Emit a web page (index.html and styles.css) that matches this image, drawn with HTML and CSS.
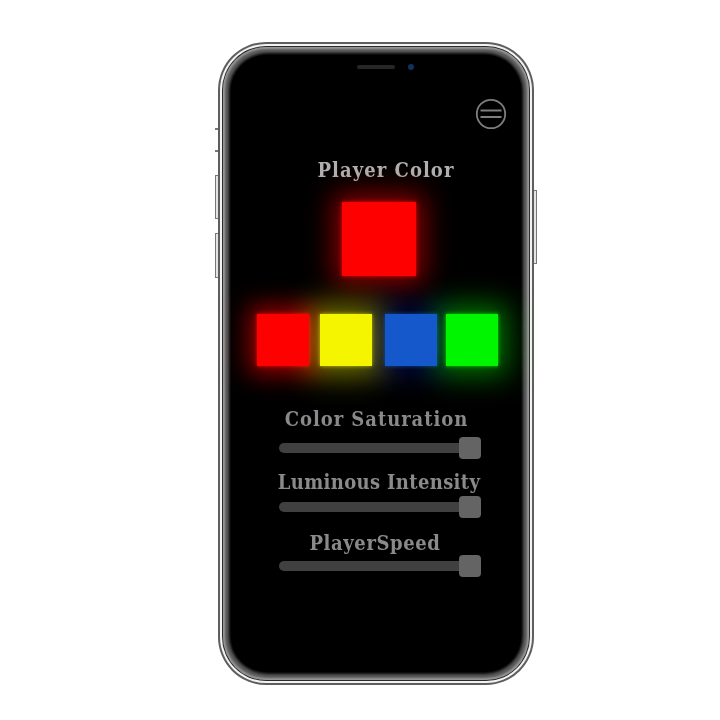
FILE: index.html
```html
<!DOCTYPE html>
<html lang="en">
<head>
<meta charset="utf-8">
<title>Player Color</title>
<link rel="stylesheet" href="styles.css">
</head>
<body>
<div class="phone">
  <span class="side side-mute-a"></span>
  <span class="side side-mute-b"></span>
  <span class="side side-vol-up"></span>
  <span class="side side-vol-down"></span>
  <span class="side side-power"></span>
  <div class="ring-white">
    <div class="ring-dark">
      <div class="ring-bezel">
        <main class="screen">
          <div class="notch">
            <span class="speaker"></span>
            <span class="camera"></span>
          </div>
          <div class="menu-row">
            <svg class="menu" width="32" height="32" viewBox="0 0 32 32" fill="none" stroke="#7e7e7e" aria-label="Menu">
              <circle cx="16" cy="16" r="14.200" stroke-width="1.800"/>
              <path d="M5.500 12.500h21M5.500 19h21" stroke-width="1.800"/>
            </svg>
          </div>
          <h1 class="title">Player Color</h1>
          <div class="swatch swatch-main"></div>
          <div class="palette">
            <div class="swatch swatch-red"></div>
            <div class="swatch swatch-yellow"></div>
            <div class="swatch swatch-blue"></div>
            <div class="swatch swatch-green"></div>
          </div>
          <section class="controls">
            <label class="label label-a">Color Saturation</label>
            <input class="slider slider-a" type="range" min="0" max="100" value="100">
            <label class="label label-b">Luminous Intensity</label>
            <input class="slider slider-b" type="range" min="0" max="100" value="100">
            <label class="label label-c">PlayerSpeed</label>
            <input class="slider slider-c" type="range" min="0" max="100" value="100">
          </section>
        </main>
      </div>
    </div>
  </div>
</div>
</body>
</html>
```

FILE: styles.css
```css
* { box-sizing: border-box; }

html, body { margin: 0; height: 100%; background: #fff; }

body { padding: 42px 0 0 218px; }

.phone {
  position: relative;
  width: 316px;
  height: 643px;
  padding: 2px;
  border-radius: 48px;
  background: #5e5e5e;
}

.ring-white {
  height: 100%;
  padding: 2px;
  border-radius: 46px;
  background: #f2f2f2;
}

.ring-dark {
  height: 100%;
  padding: 1px;
  border-radius: 44px;
  background: #2c2c2c;
}

.ring-bezel {
  height: 100%;
  padding: 8px;
  border-radius: 43px;
  background: #5c5c5c;
  box-shadow: inset 0 0 2px 2px #989898;
}

.screen {
  height: 100%;
  border-radius: 36px;
  background: #000;
  box-shadow: 0 0 3px 2px #000;
  display: flex;
  flex-direction: column;
  align-items: center;
  font-family: "DejaVu Serif Condensed", "DejaVu Serif", serif;
  font-weight: 700;
}

.side {
  position: absolute;
  width: 3px;
  background: #e4e4e4;
  border: 1px solid #777;
}
.side-mute-a { left: -3px; top: 86px; height: 1px; }
.side-mute-b { left: -3px; top: 108px; height: 1px; }
.side-vol-up { left: -3px; top: 133px; height: 44px; border-right: 0; }
.side-vol-down { left: -3px; top: 191px; height: 45px; border-right: 0; }
.side-power { right: -3px; top: 148px; height: 74px; border-left: 0; }

.notch {
  align-self: stretch;
  height: 20px;
  padding: 4px 0 0 126px;
  display: flex;
  align-items: center;
  gap: 13px;
}

.speaker {
  width: 38px;
  height: 4px;
  border-radius: 2px;
  background: #262626;
}

.camera {
  width: 6px;
  height: 6px;
  border-radius: 50%;
  background: #12305e;
}

.menu-row {
  align-self: stretch;
  height: 32px;
  margin-top: 23px;
  padding-right: 14px;
  display: flex;
  justify-content: flex-end;
}

.menu { display: block; }

.title {
  margin: 27px 0 0 20px;
  font-size: 20px;
  line-height: 26px;
  font-weight: 700;
  letter-spacing: 1.05px;
  white-space: nowrap;
  color: #b0b0b0;
  filter: blur(.3px);
}

.swatch {
  position: relative;
}

.swatch::after {
  content: "";
  position: absolute;
  inset: 0;
  z-index: 1;
  background: inherit;
}

.swatch-main {
  width: 74px;
  height: 74px;
  margin: 19px 0 0 6px;
  background: #fe0000;
  box-shadow: 0 0 4px rgba(255, 0, 0, .9), 0 0 26px 8px rgba(255, 0, 0, .55);
}

.palette {
  align-self: stretch;
  margin-top: 38px;
  padding-left: 26px;
  display: flex;
}

.palette .swatch { width: 52px; height: 52px; }

.swatch-red { background: #fe0000; box-shadow: 0 0 4px rgba(255, 0, 0, .9), 0 0 24px 8px rgba(255, 0, 0, .6); }
.swatch-yellow { margin-left: 11px; background: #f5f500; box-shadow: 0 0 4px rgba(245, 245, 0, .7), 0 0 28px 10px rgba(245, 245, 0, .45); }
.swatch-blue { margin-left: 13px; background: #1558cc; box-shadow: 0 0 4px rgba(21, 88, 204, .7), 0 0 28px 10px rgba(10, 30, 190, .3); }
.swatch-green { margin-left: 9px; background: #00f500; box-shadow: 0 0 4px rgba(0, 245, 0, .8), 0 0 28px 10px rgba(0, 245, 0, .45); }

.controls {
  margin: 43px 0 0 8px;
  width: 202px;
  display: flex;
  flex-direction: column;
  align-items: center;
}

.label {
  font-size: 20px;
  line-height: 20px;
  white-space: nowrap;
  color: #8a8a8a;
  filter: blur(.3px);
}

.label-a { margin-right: 7px; letter-spacing: .95px; }
.label-b { margin: 13px 2px 0 0; letter-spacing: .35px; }
.label-c { margin: 15px 10px 0 0; letter-spacing: .6px; }

.slider {
  -webkit-appearance: none;
  appearance: none;
  display: block;
  width: 202px;
  height: 22px;
  background: transparent;
  filter: blur(.5px);
}

.slider-a { margin: 8px 0 0; }
.slider-b { margin: 4px 0 0; }
.slider-c { margin: 2px 0 0; }

.slider::-webkit-slider-runnable-track {
  height: 10px;
  border-radius: 5px;
  background: #404040;
}

.slider::-webkit-slider-thumb {
  -webkit-appearance: none;
  width: 22px;
  height: 22px;
  margin-top: -6px;
  border-radius: 4px;
  background: #646464;
}
```
